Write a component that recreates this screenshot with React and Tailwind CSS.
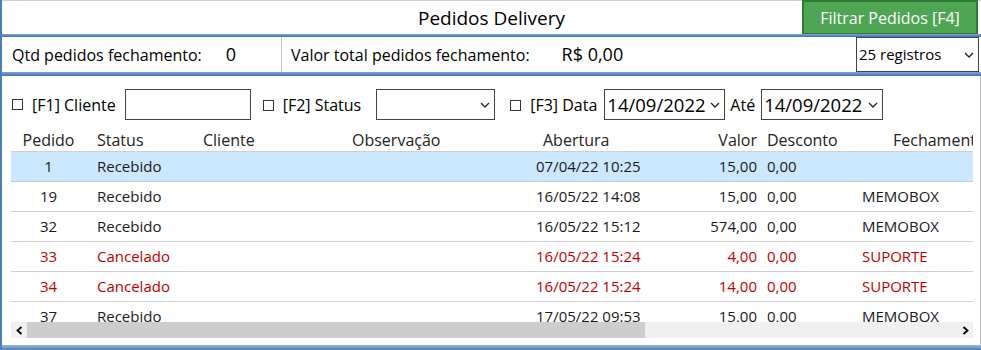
import React from "react";

const rows = [
  { p: "1", s: "Recebido", a: "07/04/22 10:25", v: "15,00", d: "0,00", f: "", red: false, sel: true },
  { p: "19", s: "Recebido", a: "16/05/22 14:08", v: "15,00", d: "0,00", f: "MEMOBOX", red: false },
  { p: "32", s: "Recebido", a: "16/05/22 15:12", v: "574,00", d: "0,00", f: "MEMOBOX", red: false },
  { p: "33", s: "Cancelado", a: "16/05/22 15:24", v: "4,00", d: "0,00", f: "SUPORTE", red: true },
  { p: "34", s: "Cancelado", a: "16/05/22 15:24", v: "14,00", d: "0,00", f: "SUPORTE", red: true },
  { p: "37", s: "Recebido", a: "17/05/22 09:53", v: "15,00", d: "0,00", f: "MEMOBOX", red: false },
];

function Chevron({ className = "" }) {
  return (
    <svg width="10" height="6" viewBox="0 0 10 6" className={className}>
      <path d="M1 1 L5 5 L9 1" fill="none" stroke="#222" strokeWidth="1.3" />
    </svg>
  );
}

function Box() {
  return <span className="inline-block w-[11px] h-[11px] border border-[#333] mr-[9px] shrink-0" />;
}

function Cols({ r, header }) {
  return (
    <>
      <div className="w-[75px] shrink-0 text-center">{r.p}</div>
      <div className="w-[111px] shrink-0 pl-[11px]">{r.s}</div>
      <div className="w-[149px] shrink-0 pl-[6px]">{r.c}</div>
      <div className="w-[184px] shrink-0 pl-[6px]">{r.o}</div>
      <div className={"w-[121px] shrink-0 " + (header ? "pl-[13px]" : "pl-[6px]")}>{r.a}</div>
      <div className="w-[110px] shrink-0 text-right pr-[4px]">{r.v}</div>
      <div className="w-[95px] shrink-0 pl-[6px]">{r.d}</div>
      <div className={"flex-1 overflow-hidden whitespace-nowrap " + (header ? "pl-[37px]" : "pl-[6px]")}>{r.f}</div>
    </>
  );
}

export default function App() {
  return (
    <div
      className="w-[981px] h-[350px] bg-white flex flex-col overflow-hidden text-[#1a1a1a] border-l-2 border-l-[#4d7dbb]"
      style={{ fontFamily: '"Open Sans", "Noto Sans", sans-serif' }}
    >
      {/* header */}
      <div className="h-[34px] grid grid-cols-[179px_1fr_179px] border-t border-t-[#cfcfcf] shrink-0">
        <div />
        <div className="flex items-center justify-center text-[19px] text-black">Pedidos Delivery</div>
        <div className="pr-[3px] -mt-px">
          <div className="h-[35px] bg-[#4ea553] border-2 border-[#2f7a35] flex items-center justify-center text-white text-[16px]">
            Filtrar Pedidos [F4]
          </div>
        </div>
      </div>
      <div className="h-[3px] shrink-0 bg-gradient-to-b from-[#7fa6d3] to-[#3f70b0]" />
      {/* info row */}
      <div className="h-[35px] shrink-0 flex items-stretch text-[16px] text-black">
        <div className="w-[280px] flex items-center pl-[10px] border-r border-r-[#c8c8c8]">
          <span>Qtd pedidos fechamento:</span>
          <span className="ml-[24px] text-[18px]">0</span>
        </div>
        <div className="flex-1 flex items-center pl-[9px]">
          <span>Valor total pedidos fechamento:</span>
          <span className="ml-[32px] text-[18px]">R$ 0,00</span>
        </div>
        <div className="w-[123px] mr-[2px] border border-[#444] flex items-center justify-between pl-[2px] pr-[4px] text-[15px]">
          <span>25 registros</span>
          <Chevron />
        </div>
      </div>
      <div className="h-[4px] shrink-0 bg-gradient-to-b from-[#7fa6d3] to-[#3f70b0]" />
      {/* content */}
      <div className="flex-1 flex flex-col border-r border-r-[#bdbdbd] min-h-0">
        <div className="flex items-center pt-[13px] pl-[10px] text-[16px] text-black">
          <Box />
          <span>[F1] Cliente</span>
          <div className="ml-[9px] w-[126px] h-[31px] border border-[#444]" />
          <span className="ml-[12px]"><Box /></span>
          <span>[F2] Status</span>
          <div className="ml-[15px] w-[119px] h-[31px] border border-[#444] flex items-center justify-end pr-[4px]">
            <Chevron />
          </div>
          <span className="ml-[15px]"><Box /></span>
          <span>[F3] Data</span>
          <div className="ml-[7px] w-[121px] h-[31px] border border-[#444] flex items-center justify-between pl-[2px] pr-[4px] text-[18.5px]">
            <span>14/09/2022</span>
            <Chevron />
          </div>
          <span className="ml-[5px]">Até</span>
          <div className="ml-[6px] w-[122px] h-[31px] border border-[#444] flex items-center justify-between pl-[2px] pr-[4px] text-[18.5px]">
            <span>14/09/2022</span>
            <Chevron />
          </div>
        </div>
        <div className="ml-[9px] mr-[7px] mt-[9px] flex flex-col text-[15px]">
          <div className="h-[23px] flex items-center border-b border-b-[#d0d0d0] text-[#222] text-[16px]">
            <Cols header r={{ p: "Pedido", s: "Status", c: "Cliente", o: "Observação", a: "Abertura", v: "Valor", d: "Desconto", f: "Fechamento" }} />
          </div>
          <div className="h-[170px] overflow-hidden flex flex-col">
            {rows.map((r, i) => (
              <div
                key={i}
                className={
                  "h-[30px] shrink-0 flex items-center border-b " +
                  (r.sel ? "bg-[#cce8ff] border-b-[#a9d4f5] " : "border-b-[#d0d0d0] ") +
                  (r.red ? "text-[#c00000]" : "text-[#1a1a1a]")
                }
              >
                <Cols r={r} />
              </div>
            ))}
          </div>
          <div className="h-[16px] bg-[#f0f0f0] flex items-center relative">
            <span className="w-[16px] flex justify-center">
              <svg width="7" height="9" viewBox="0 0 7 9"><path d="M5.5 1 L1.5 4.5 L5.5 8" fill="none" stroke="#000" strokeWidth="1.8" /></svg>
            </span>
            <div className="h-[16px] w-[618px] bg-[#cdcdcd]" />
            <div className="flex-1" />
            <span className="w-[16px] flex justify-center">
              <svg width="7" height="9" viewBox="0 0 7 9"><path d="M1.5 1 L5.5 4.5 L1.5 8" fill="none" stroke="#000" strokeWidth="1.8" /></svg>
            </span>
          </div>
        </div>
      </div>
      <div className="h-[5px] shrink-0 bg-gradient-to-b from-[#9ab9de] to-[#4d7dbb]" />
    </div>
  );
}
